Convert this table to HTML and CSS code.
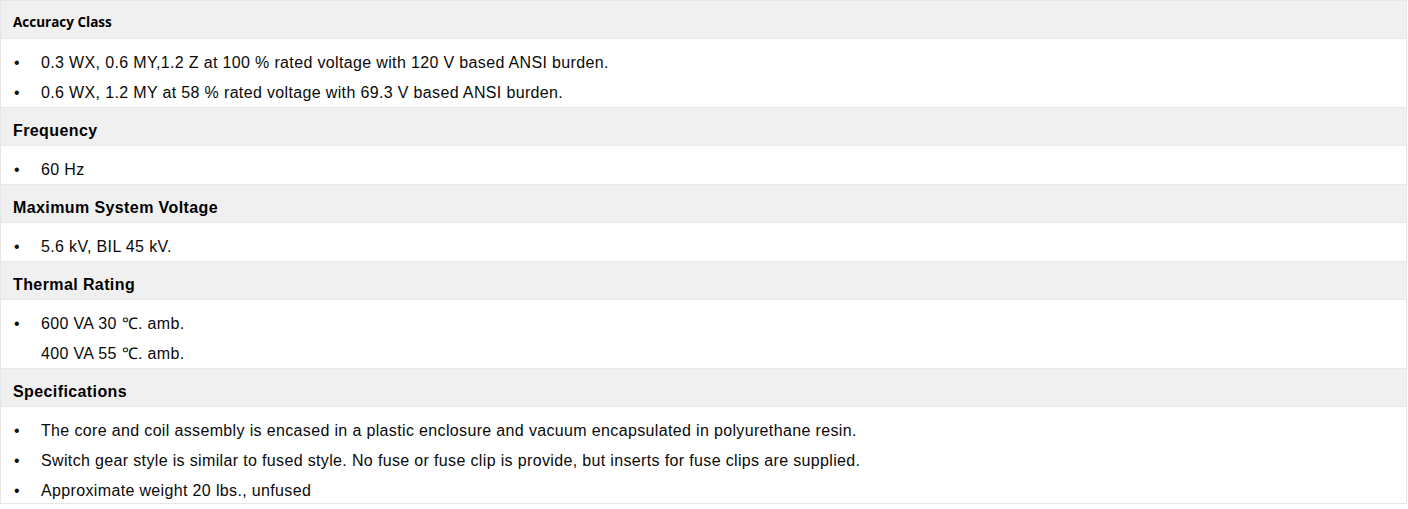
FILE: index.html
```html
<!DOCTYPE html>
<html lang="en">
<head>
<meta charset="utf-8">
<title>Specifications</title>
<link rel="stylesheet" href="styles.css">
</head>
<body>
<div class="spec">
  <div class="head head-first">Accuracy Class</div>
  <ul class="items">
    <li>0.3 WX, 0.6 MY,1.2 Z at 100 % rated voltage with 120 V based ANSI burden.</li>
    <li>0.6 WX, 1.2 MY at 58 % rated voltage with 69.3 V based ANSI burden.</li>
  </ul>
  <div class="head">Frequency</div>
  <ul class="items">
    <li>60 Hz</li>
  </ul>
  <div class="head">Maximum System Voltage</div>
  <ul class="items">
    <li>5.6 kV, BIL 45 kV.</li>
  </ul>
  <div class="head">Thermal Rating</div>
  <ul class="items">
    <li>600 VA 30 ℃. amb.</li>
    <li class="cont">400 VA 55 ℃. amb.</li>
  </ul>
  <div class="head">Specifications</div>
  <ul class="items items-last">
    <li>The core and coil assembly is encased in a plastic enclosure and vacuum encapsulated in polyurethane resin.</li>
    <li>Switch gear style is similar to fused style. No fuse or fuse clip is provide, but inserts for fuse clips are supplied.</li>
    <li>Approximate weight 20 lbs., unfused</li>
  </ul>
</div>
</body>
</html>
```
FILE: styles.css
```css
html, body {
  margin: 0;
  padding: 0;
  background: #ffffff;
}

body {
  font-family: "Liberation Sans", Arial, sans-serif;
  color: #0a0a0a;
}

.spec {
  width: 1405px;
  border: 1px solid #e6e6e6;
  display: flex;
  flex-direction: column;
}

.head {
  height: 39px;
  box-sizing: border-box;
  padding: 14px 0 0 12px;
  background: #f0f0f0;
  border-top: 1px solid #e8e8e8;
  border-bottom: 1px solid #e8e8e8;
  font-size: 16px;
  font-weight: bold;
  line-height: 18px;
  letter-spacing: 0.4px;
  color: #000000;
}

.head-first {
  height: 38px;
  border-top: none;
  padding-top: 12px;
  font-family: "Open Sans", "Liberation Sans", sans-serif;
  font-size: 13.5px;
  line-height: 18px;
  letter-spacing: 0;
}

.items {
  list-style: none;
  margin: 0;
  padding: 13px 0 3px 0;
  font-size: 16px;
  line-height: 22px;
  letter-spacing: 0.35px;
}

.items-last {
  padding-bottom: 1px;
}

.items li {
  display: flex;
}

.items li + li {
  margin-top: 8px;
}

.items li::before {
  content: "•";
  width: 27px;
  padding-left: 13px;
  flex: none;
  letter-spacing: 0;
}

.items li.cont::before {
  content: "";
}
```
